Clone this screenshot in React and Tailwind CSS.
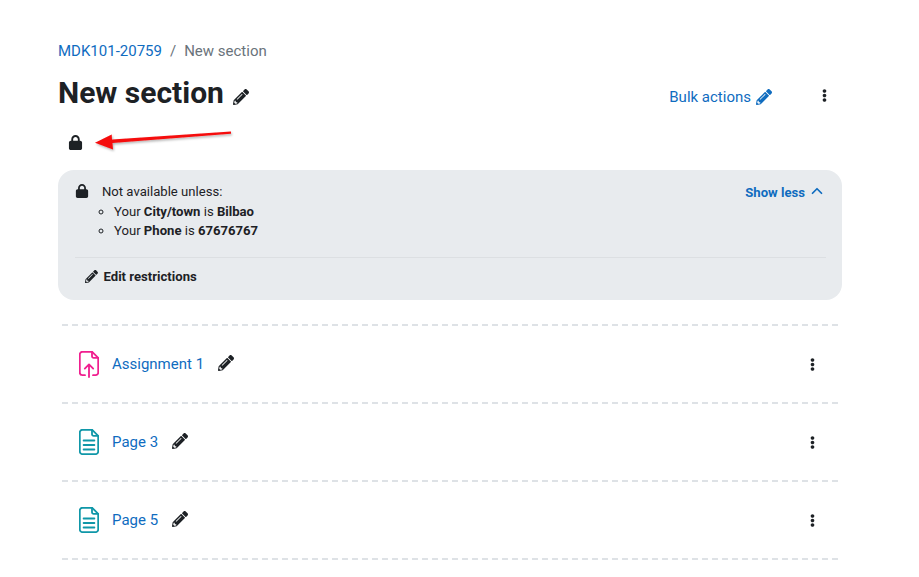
import { FaPencilAlt, FaEllipsisV } from "react-icons/fa";
import { FaLock } from "react-icons/fa6";
import { ChevronUp } from "lucide-react";

function UploadFileIcon() {
  return (
    <svg width="20" height="27" viewBox="0 0 20 27" fill="none" stroke="#f01f8f" strokeWidth="1.8" strokeLinejoin="round" strokeLinecap="round">
      <path d="M6 24.2H3.4a2.6 2.6 0 0 1-2.6-2.6V3.4A2.6 2.6 0 0 1 3.4.8h9.8l6 6v14.8a2.6 2.6 0 0 1-2.6 2.6H14" />
      <path d="M13 1v4.2a1.6 1.6 0 0 0 1.6 1.6H19" />
      <path d="M10 26V13.5M5.8 17.6 10 13.4l4.2 4.2" />
    </svg>
  );
}

function PageIcon() {
  return (
    <svg width="20" height="26" viewBox="0 0 20 26" fill="none" stroke="#0f97a8" strokeWidth="1.8" strokeLinejoin="round" strokeLinecap="round">
      <path d="M3.4.8h9.8l6 6v15.6a2.8 2.8 0 0 1-2.8 2.8H3.6a2.8 2.8 0 0 1-2.8-2.8V3.4A2.6 2.6 0 0 1 3.4.8Z" />
      <path d="M13 1v4.2a1.6 1.6 0 0 0 1.6 1.6H19" />
      <path d="M4.6 11.5h10.8M4.6 16h10.8M4.6 20.5h10.8" />
    </svg>
  );
}

const activities = [
  { name: "Assignment 1", icon: <UploadFileIcon /> },
  { name: "Page 3", icon: <PageIcon /> },
  { name: "Page 5", icon: <PageIcon /> },
];

export default function App() {
  return (
    <div className="relative w-[919px] h-[577px] overflow-hidden bg-white pl-[58px] pr-[77px] pt-[41px] font-['Roboto',sans-serif] text-[15px] text-[#1d2125]">
      {/* Breadcrumb */}
      <div className="flex items-center h-[20px] leading-[20px]">
        <span className="text-[#0f6cbf]">MDK101-20759</span>
        <span className="text-[#6a737b] px-[8px]">/</span>
        <span className="text-[#6a737b]">New section</span>
      </div>

      {/* Title row */}
      <div className="flex items-center justify-between mt-[12px] h-[40px]">
        <div className="flex items-center gap-[9px]">
          <h1 className="text-[30px] font-bold leading-[40px]">New section</h1>
          <FaPencilAlt className="w-[16px] h-[16px] mt-[7px]" />
        </div>
        <div className="flex items-center mt-[7px] pr-[11px]">
          <span className="text-[#0f6cbf] leading-[20px]">Bulk actions</span>
          <FaPencilAlt className="w-[16px] h-[16px] ml-[5px] text-[#0f6cbf]" />
          <FaEllipsisV className="w-[13px] h-[13px] ml-[46px] -mt-[2px]" />
        </div>
      </div>

      {/* Lock */}
      <div className="pl-[10px] mt-[22px] h-[18px]">
        <FaLock className="w-[15px] h-[15px]" />
      </div>

      {/* Availability card */}
      <div className="mt-[17px] h-[130px] rounded-[16px] bg-[#e8ebee] pl-[17px] pr-[16px] pt-[12px] text-[13.125px]">
        <div className="flex justify-between h-[75px]">
          <div className="flex">
            <FaLock className="w-[14px] h-[14px] mt-[2px] mr-[13px]" />
            <div className="leading-[19px]">
              <div className="mb-[1px]">Not available unless:</div>
              <ul className="list-[circle] pl-[12px] ml-0">
                <li>Your <b>City/town</b> is <b>Bilbao</b></li>
                <li>Your <b>Phone</b> is <b>67676767</b></li>
              </ul>
            </div>
          </div>
          <div className="flex items-start font-bold text-[#0f6cbf] leading-[17px] pt-[2px]">
            <span>Show less</span>
            <ChevronUp className="w-[18px] h-[18px] ml-[3px] -mt-[2px]" strokeWidth={2.3} />
          </div>
        </div>
        <div className="border-t border-[#dcdfe2] flex items-center h-[38px] pl-[10px] font-bold">
          <FaPencilAlt className="w-[13px] h-[13px] mr-[5.5px]" />
          <span>Edit restrictions</span>
        </div>
      </div>

      {/* Activities */}
      <div className="mt-[24px] mx-[4px]">
        {activities.map((a) => (
          <div key={a.name} className="h-[78px] border-t-2 border-dashed border-[#dee2e6] flex items-center pl-[16px] pr-[19.5px]">
            <div className="w-[22px] flex justify-center">{a.icon}</div>
            <span className="ml-[12px] text-[#0f6cbf]">{a.name}</span>
            <FaPencilAlt className="w-[16px] h-[16px] ml-[14px] -mt-[2px]" />
            <FaEllipsisV className="w-[13px] h-[13px] ml-auto" />
          </div>
        ))}
        <div className="border-t-2 border-dashed border-[#dee2e6]" />
      </div>

      {/* Red annotation arrow */}
      <svg className="absolute left-[90px] top-[125px]" width="150" height="30" viewBox="0 0 150 30">
        <defs>
          <filter id="arrowShadow" x="-10%" y="-50%" width="120%" height="200%">
            <feDropShadow dx="1" dy="1.5" stdDeviation="1" floodColor="#000" floodOpacity="0.3" />
          </filter>
        </defs>
        <g filter="url(#arrowShadow)" fill="#f50f0f">
          <path d="M5 17.7 L21.7 9.6 L22 14.6 L141 6.4 L141 8.8 L22.5 18 L23 24.4 Z" />
        </g>
      </svg>
    </div>
  );
}
